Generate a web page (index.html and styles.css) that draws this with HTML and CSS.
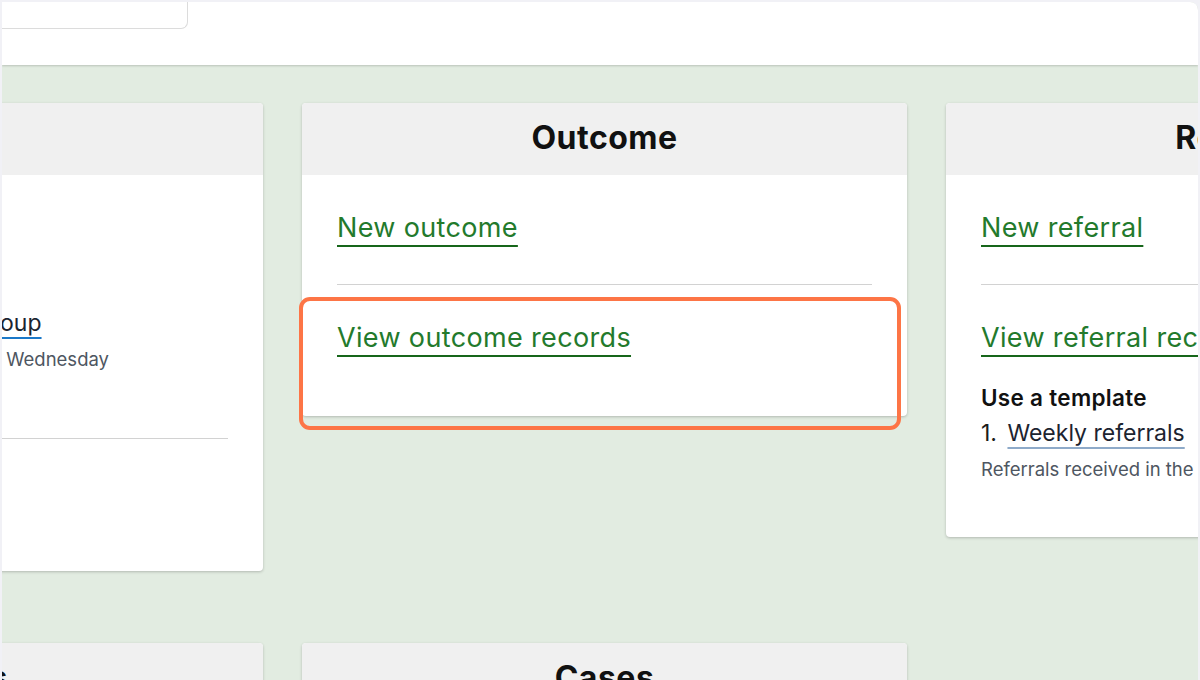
FILE: index.html
```html
<!DOCTYPE html>
<html lang="en">
<head>
<meta charset="utf-8">
<title>Dashboard</title>
<link rel="stylesheet" href="styles.css">
</head>
<body>
<div class="frame">
  <header class="topbar">
    <div class="search"></div>
  </header>
  <main class="grid">
    <section class="card">
      <div class="card-head"><h2 class="card-title">Visit</h2></div>
      <div class="card-body">
        <div class="block block-left">
          <h3 class="tpl-title">Use a template</h3>
          <div class="tpl-item"><span class="num">1.</span> <a class="tpl-link blue" href="#">Attendance in a weekly group</a></div>
          <p class="tpl-desc">Everyone who came to a course on Wednesday</p>
        </div>
        <div class="block block-tail"></div>
      </div>
    </section>

    <section class="card">
      <div class="card-head"><h2 class="card-title">Outcome</h2></div>
      <div class="card-body">
        <div class="block"><a class="big-link" href="#">New outcome</a></div>
        <div class="block last"><a class="big-link" href="#">View outcome records</a></div>
      </div>
    </section>

    <section class="card">
      <div class="card-head"><h2 class="card-title">Referrals</h2></div>
      <div class="card-body">
        <div class="block"><a class="big-link" href="#">New referral</a></div>
        <div class="block last-tpl">
          <a class="big-link" href="#">View referral records</a>
          <h3 class="tpl-title">Use a template</h3>
          <div class="tpl-item"><span class="num">1.</span> <a class="tpl-link" href="#">Weekly referrals</a></div>
          <p class="tpl-desc">Referrals received in the last week</p>
        </div>
      </div>
    </section>

    <section class="card">
      <div class="card-head"><h2 class="card-title">Notes</h2></div>
      <div class="card-body"><div class="block"></div></div>
    </section>

    <section class="card">
      <div class="card-head"><h2 class="card-title">Cases</h2></div>
      <div class="card-body"><div class="block"></div></div>
    </section>
  </main>
  <div class="highlight"></div>
</div>
</body>
</html>
```

FILE: styles.css
```css
html, body {
  margin: 0;
  padding: 0;
  height: 680px;
  overflow: hidden;
  background: #f1f1f6;
  font-family: Inter, "Noto Sans", "Liberation Sans", sans-serif;
}

.frame {
  position: relative;
  margin: 2px 2px 0 2px;
  height: 678px;
  overflow: hidden;
  background: #e2ece1;
  border-radius: 0 8px 0 0;
}

.topbar {
  height: 63px;
  background: #ffffff;
  box-shadow: 0 1px 2px rgba(0, 0, 0, 0.18);
  position: relative;
  z-index: 1;
}

.search {
  width: 185px;
  height: 26px;
  border-right: 1px solid #dcdcdc;
  border-bottom: 1px solid #dcdcdc;
  border-radius: 0 0 7px 0;
  background: #fff;
}

.grid {
  display: grid;
  grid-template-columns: 605px 605px 605px;
  column-gap: 39px;
  row-gap: 72px;
  margin-left: -344px;
  padding-top: 38px;
  align-items: start;
}

.card {
  background: #ffffff;
  border-radius: 4px;
  box-shadow: 0 1px 3px rgba(0, 0, 0, 0.22);
  overflow: hidden;
}

.card-head {
  height: 72px;
  padding-bottom: 3px;
  box-sizing: border-box;
  background: #f0f0f0;
  display: flex;
  align-items: center;
  justify-content: center;
}

.card-title {
  margin: 0;
  font-size: 32px;
  font-weight: 700;
  color: #111111;
  letter-spacing: 0.5px;
}

.card-body {
  padding: 0 35px;
}

.block {
  padding: 36px 0 39px;
  border-bottom: 1px solid #d2d2d2;
}

.block:last-child {
  border-bottom: none;
}

.block.last {
  padding-bottom: 61px;
}

.big-link {
  display: inline-block;
  font-size: 27px;
  line-height: 34px;
  color: #237a2c;
  text-decoration: underline;
  text-decoration-color: #17661a;
  text-decoration-thickness: 2px;
  text-underline-offset: 8px;
  letter-spacing: 0.35px;
}

.last-tpl {
  padding-bottom: 56px;
}

.tpl-title {
  margin: 29px 0 0;
  font-size: 22.5px;
  line-height: 28px;
  font-weight: 600;
  color: #111111;
  letter-spacing: 0.3px;
}

.tpl-item {
  margin-top: 5px;
  font-size: 23px;
  line-height: 32px;
  color: #1c1c1c;
}

.num {
  margin-right: 4px;
}

.tpl-link {
  color: #1c2430;
  text-decoration: underline;
  text-decoration-color: #8eaac9;
  text-decoration-thickness: 2px;
  text-underline-offset: 6px;
}

.tpl-link.blue {
  color: #1c2430;
  text-decoration-color: #1a78c8;
}

.tpl-desc {
  margin: 8px 0 0;
  font-size: 18.5px;
  line-height: 24px;
  color: #4e5661;
}

.block-left {
  padding-top: 99px;
  padding-bottom: 67px;
}

.block-left .tpl-title {
  margin-top: 0;
}

.block-tail {
  height: 57px;
  padding: 36px 0 39px;
}

.highlight {
  position: absolute;
  left: 297px;
  top: 295px;
  width: 594px;
  height: 125px;
  border: 4px solid #fd7546;
  border-radius: 11px;
  pointer-events: none;
  z-index: 2;
}
```
